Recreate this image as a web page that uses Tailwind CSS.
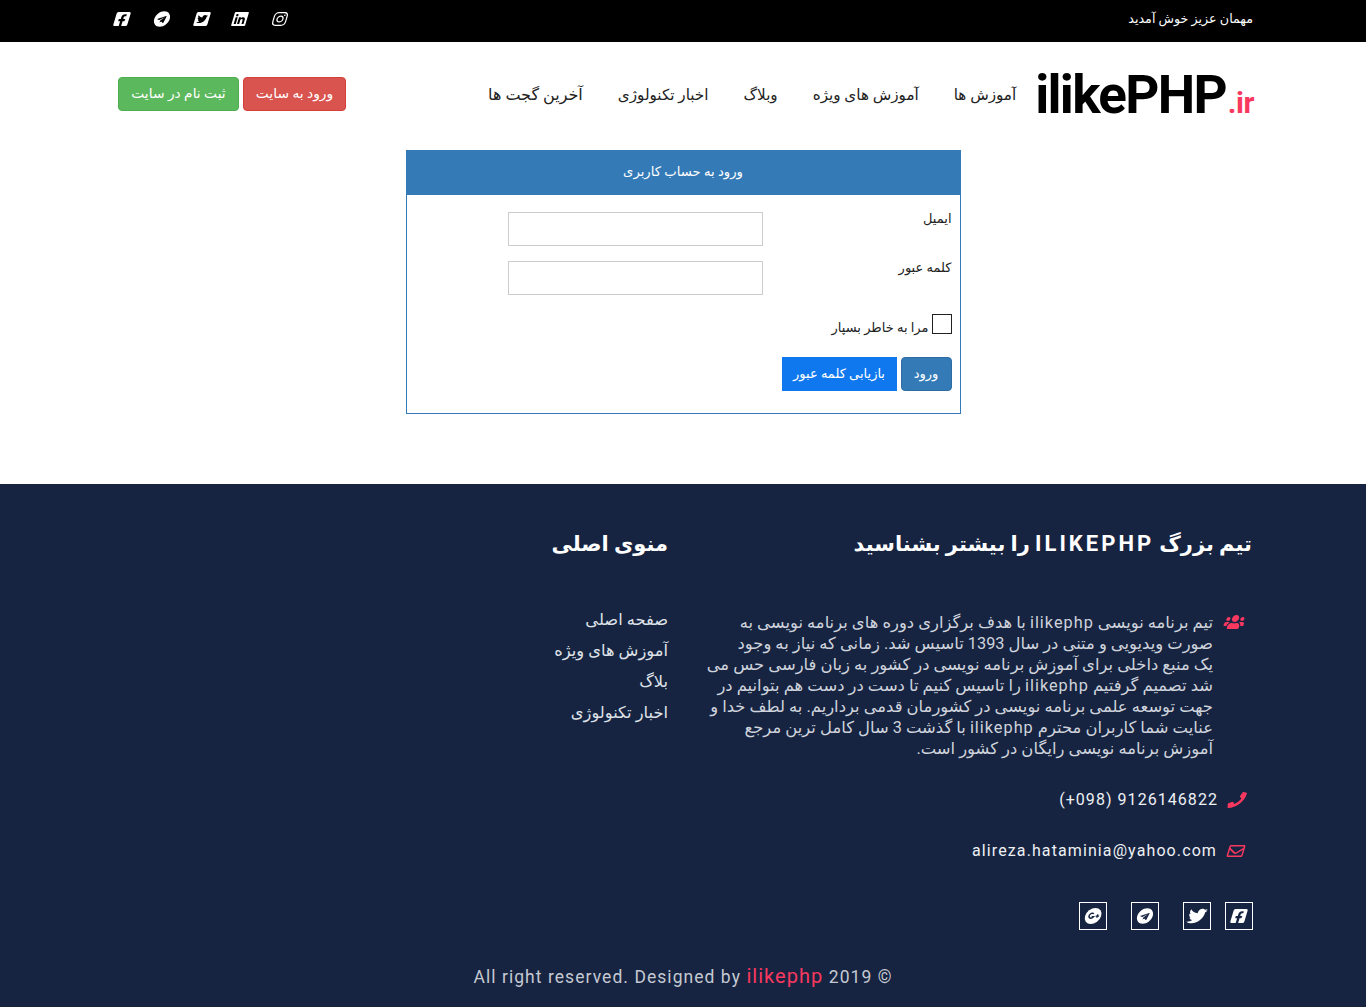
<!DOCTYPE html>
<html lang="fa" dir="rtl">
<head>
<meta charset="UTF-8">
<title>ورود به حساب کاربری | ilikePHP</title>
<script src="https://cdn.jsdelivr.net/npm/@tailwindcss/browser@4"></script>
</head>
<body class="bg-white font-['Roboto','DejaVu_Sans',sans-serif] text-[#222]">

<!-- top bar -->
<div class="bg-black h-[42px] flex items-center justify-between pr-[113px] pl-[114px] text-white">
  <span class="text-[12.7px] leading-none -mt-1">مهمان عزیز خوش آمدید</span>
  <div class="flex gap-[24px] -mt-1">
    <svg class="w-4 h-4 fill-white overflow-visible" viewBox="0 0 448 512"><g transform="matrix(1 0 -0.3 1 77 0)"><path d="M224.100 141c-63.600 0-114.900 51.300-114.900 114.900s51.300 114.900 114.900 114.900S339 319.500 339 255.900 287.700 141 224.100 141zm0 189.600c-41.100 0-74.700-33.500-74.700-74.700s33.500-74.700 74.700-74.700 74.700 33.500 74.700 74.700-33.600 74.700-74.700 74.700zm146.400-194.300c0 14.900-12 26.800-26.800 26.800-14.900 0-26.800-12-26.800-26.800s12-26.800 26.800-26.800 26.800 12 26.800 26.800zm76.100 27.200c-1.700-35.900-9.900-67.700-36.200-93.900-26.200-26.200-58-34.400-93.900-36.200-37-2.100-147.900-2.100-184.900 0-35.800 1.700-67.600 9.900-93.900 36.100s-34.400 58-36.200 93.900c-2.100 37-2.100 147.900 0 184.900 1.700 35.900 9.900 67.700 36.200 93.900s58 34.400 93.900 36.200c37 2.100 147.900 2.100 184.900 0 35.900-1.700 67.700-9.900 93.900-36.200 26.200-26.200 34.400-58 36.200-93.900 2.100-37 2.100-147.800 0-184.800zM398.800 388c-7.800 19.600-22.900 34.700-42.600 42.600-29.500 11.700-99.500 9-132.100 9s-102.700 2.600-132.100-9c-19.600-7.800-34.700-22.900-42.600-42.600-11.700-29.500-9-99.500-9-132.100s-2.600-102.700 9-132.100c7.800-19.600 22.900-34.700 42.600-42.600 29.500-11.700 99.500-9 132.100-9s102.700-2.600 132.100 9c19.600 7.800 34.700 22.900 42.600 42.600 11.700 29.500 9 99.500 9 132.100s2.700 102.700-9 132.100z"/></g></svg>
    <svg class="w-4 h-4 fill-white overflow-visible" viewBox="0 0 448 512"><g transform="matrix(1 0 -0.3 1 77 0)"><path d="M416 32H31.900C14.300 32 0 46.500 0 64.300v383.400C0 465.500 14.300 480 31.900 480H416c17.600 0 32-14.500 32-32.300V64.300c0-17.800-14.400-32.300-32-32.300zM135.400 416H69V202.200h66.500V416zm-33.200-243c-21.300 0-38.500-17.300-38.500-38.500S80.900 96 102.200 96c21.200 0 38.500 17.300 38.500 38.500 0 21.300-17.200 38.500-38.500 38.500zm282.100 243h-66.400V312c0-24.800-.5-56.700-34.500-56.700-34.600 0-39.900 27-39.900 54.900V416h-66.400V202.200h63.700v29.200h.9c8.900-16.800 30.600-34.500 62.900-34.500 67.200 0 79.700 44.300 79.700 101.900V416z"/></g></svg>
    <svg class="w-4 h-4 -mr-[2px] fill-white overflow-visible" viewBox="0 0 448 512"><g transform="matrix(1 0 -0.3 1 77 0)"><path d="M400 32H48C21.500 32 0 53.500 0 80v352c0 26.500 21.500 48 48 48h352c26.500 0 48-21.500 48-48V80c0-26.500-21.500-48-48-48zm-48.900 158.800c.2 2.800.2 5.700.2 8.500 0 86.700-66 186.600-186.600 186.600-37.200 0-71.700-10.800-100.700-29.400 5.300.6 10.400.8 15.800.8 30.700 0 58.900-10.400 81.400-28-28.800-.6-53-19.500-61.300-45.500 10.100 1.500 19.200 1.500 29.600-1.200-30-6.100-52.500-32.500-52.500-64.400v-.8c8.700 4.900 18.900 7.900 29.600 8.300a65.447 65.447 0 0 1-29.200-54.600c0-12.200 3.200-23.400 8.900-33.100 32.300 39.800 80.800 65.800 135.200 68.600-9.300-44.500 24-80.600 64-80.600 18.900 0 35.900 7.900 47.900 20.700 14.800-2.800 29-8.300 41.600-15.800-4.900 15.200-15.100 28-28.600 36.100 13.100-1.400 25.800-5.100 37.600-10.200-8.900 13.100-20.100 24.700-32.900 34z"/></g></svg>
    <svg class="w-4 h-4 fill-white overflow-visible" viewBox="0 0 496 512"><g transform="matrix(1 0 -0.3 1 77 0)"><path d="M248 8C111 8 0 119 0 256s111 248 248 248 248-111 248-248S385 8 248 8zm121.800 169.900l-40.700 191.800c-3 13.600-11.100 16.900-22.400 10.500l-62-45.700-29.900 28.800c-3.300 3.300-6.100 6.100-12.500 6.100l4.400-63.100 114.900-103.800c5-4.400-1.100-6.900-7.700-2.500l-142 89.400-61.200-19.100c-13.300-4.200-13.600-13.300 2.800-19.700l239.100-92.200c11.100-4 20.800 2.700 17.200 19.500z"/></g></svg>
    <svg class="w-4 h-4 fill-white overflow-visible" viewBox="0 0 448 512"><g transform="matrix(1 0 -0.3 1 77 0)"><path d="M400 32H48A48 48 0 0 0 0 80v352a48 48 0 0 0 48 48h137.250V327.690h-63V256h63v-54.640c0-62.150 37-96.480 93.670-96.480 27.140 0 55.520 4.840 55.520 4.840v61h-31.270c-30.810 0-40.420 19.120-40.420 38.730V256h68.780l-11 71.690h-57.780V480H400a48 48 0 0 0 48-48V80a48 48 0 0 0-48-48z"/></g></svg>
  </div>
</div>

<!-- header -->
<header class="h-[108px] flex items-center justify-between pr-[112px] pl-[118px] pb-1">
  <div class="flex items-center gap-[19px]">
    <a dir="ltr" class="flex items-baseline font-['Roboto',sans-serif] font-bold text-black text-[53px] leading-none tracking-[-1.7px] mt-[2px]">ilikePHP<span class="text-[#f9385f] text-[30px] tracking-[-0.5px] ml-[2px]">.ir</span></a>
    <nav class="flex items-center gap-[35px] text-[15.2px] text-[#222] pt-[2px]">
      <a>آموزش ها</a>
      <a>آموزش های ویژه</a>
      <a>وبلاگ</a>
      <a>اخبار تکنولوژی</a>
      <a class="text-[16px]">آخرین گجت ها</a>
    </nav>
  </div>
  <div class="flex gap-1 text-[13.8px] text-white">
    <a class="bg-[#d9534f] border border-[#d43f3a] rounded w-[103px] h-[34px] pb-[2px] flex items-center justify-center">ورود به سایت</a>
    <a class="bg-[#5cb85c] border border-[#4cae4c] rounded w-[121px] h-[34px] pb-[2px] flex items-center justify-center">ثبت نام در سایت</a>
  </div>
</header>

<!-- login card -->
<main class="h-[334px]">
  <div class="w-[555px] h-[264px] mx-auto border border-[#337ab7]">
    <div class="bg-[#337ab7] text-white text-[13.2px] h-[44px] pb-[2px] flex items-center justify-center">ورود به حساب کاربری</div>
    <form class="pt-[17px] pr-[8px] text-[13px]">
      <div class="flex items-start">
        <label class="w-[189px] leading-[14px]">ایمیل</label>
        <input type="text" class="w-[255px] h-[34px] border border-[#ccc] bg-white">
      </div>
      <div class="flex items-start mt-[15px]">
        <label class="w-[189px] leading-[14px]">کلمه عبور</label>
        <input type="password" class="w-[255px] h-[34px] border border-[#ccc] bg-white">
      </div>
      <div class="flex items-end gap-[3px] mt-[19px]">
        <span class="w-5 h-5 border border-[#222] bg-white"></span>
        <label class="leading-[14px] -mb-[1px]">مرا به خاطر بسپار</label>
      </div>
      <div class="flex gap-1 mt-[23px] text-white">
        <button type="button" class="bg-[#337ab7] border border-[#2e6da4] rounded w-[51px] h-[34px]">ورود</button>
        <a class="bg-[#0f78ee] w-[115px] h-[34px] flex items-center justify-center">بازیابی کلمه عبور</a>
      </div>
    </form>
  </div>
</main>

<!-- footer -->
<footer class="bg-[#162441] h-[523px] pt-[43px] pr-[114px] text-white">
  <div class="flex">
    <section class="w-[584px]">
      <h2 class="text-[21px] font-bold leading-[34px] h-[34px]">تیم بزرگ <span class="text-[22px] tracking-[3px]">ILIKEPHP</span> را بیشتر بشناسید</h2>
      <div class="flex mt-[51px]">
        <svg class="w-[21px] h-[16px] ml-[11px] mr-[7px] mt-[2px] shrink-0 fill-[#f9385f] overflow-visible" viewBox="0 0 640 512"><g transform="matrix(1 0 -0.3 1 77 0)"><path d="M96 224c35.300 0 64-28.700 64-64s-28.700-64-64-64-64 28.700-64 64 28.700 64 64 64zm448 0c35.300 0 64-28.700 64-64s-28.700-64-64-64-64 28.700-64 64 28.700 64 64 64zm32 32h-64c-17.600 0-33.500 7.100-45.100 18.600 40.300 22.100 68.900 62 75.100 109.400h66c17.700 0 32-14.300 32-32v-32c0-35.300-28.700-64-64-64zm-256 0c61.900 0 112-50.100 112-112S381.900 32 320 32 208 82.100 208 144s50.100 112 112 112zm76.800 32h-8.300c-20.800 10-43.900 16-68.500 16s-47.600-6-68.500-16h-8.300C179.600 288 128 339.600 128 403.200V432c0 26.500 21.500 48 48 48h288c26.500 0 48-21.500 48-48v-28.800c0-63.600-51.600-115.200-115.200-115.200zm-223.700-13.400C161.500 263.100 145.600 256 128 256H64c-35.300 0-64 28.700-64 64v32c0 17.700 14.300 32 32 32h65.900c6.300-47.400 34.900-87.300 75.200-109.400z"/></g></svg>
        <p class="text-[16.4px] leading-[21px] text-[#cfd3dc] whitespace-nowrap">تیم برنامه نویسی <span class="text-[16.3px] tracking-[1px]">ilikephp</span> با هدف برگزاری دوره های برنامه نویسی به<br>صورت ویدیویی و متنی در سال <span class="text-[16.3px] tracking-[1px]">1393</span> تاسیس شد. زمانی که نیاز به وجود<br>یک منبع داخلی برای آموزش برنامه نویسی در کشور به زبان فارسی حس می<br>شد تصمیم گرفتیم <span class="text-[16.3px] tracking-[1px]">ilikephp</span> را تاسیس کنیم تا دست در دست هم بتوانیم در<br>جهت توسعه علمی برنامه نویسی در کشورمان قدمی برداریم. به لطف خدا و<br>عنایت شما کاربران محترم <span class="text-[16.3px] tracking-[1px]">ilikephp</span> با گذشت <span class="text-[16.3px] tracking-[1px]">3</span> سال کامل ترین مرجع<br>آموزش برنامه نویسی رایگان در کشور است.</p>
      </div>
      <div class="flex items-center mt-[29px] h-[24px]">
        <svg class="w-[20px] h-[16px] ml-[9px] mr-[5px] fill-[#f9385f] overflow-visible" viewBox="0 0 512 512"><g transform="matrix(1 0 -0.3 1 77 0)"><path d="M493.400 24.600l-104-24c-11.300-2.600-22.900 3.300-27.500 13.900l-48 112c-4.200 9.800-1.400 21.300 6.900 28l60.600 49.600c-36 76.700-98.900 140.500-177.200 177.200l-49.600-60.600c-6.800-8.300-18.200-11.100-28-6.900l-112 48C3.900 366.500-2 378.100.6 389.400l24 104C27.100 504.200 36.700 512 48 512c256.100 0 464-207.500 464-464 0-11.200-7.700-20.900-18.600-23.400z"/></g></svg>
        <span dir="ltr" class="text-[16px] tracking-[1.05px] text-[#eef0f4]">(+098) 9126146822</span>
      </div>
      <div class="flex items-center mt-[27px] h-[24px]">
        <svg class="w-[18px] h-[16px] ml-[10px] mr-[7px] fill-[#f9385f] overflow-visible" viewBox="0 0 512 512"><g transform="matrix(1 0 -0.3 1 77 0)"><path d="M464 64H48C21.490 64 0 85.490 0 112v288c0 26.510 21.490 48 48 48h416c26.510 0 48-21.490 48-48V112c0-26.510-21.490-48-48-48zm0 48v40.805c-22.422 18.259-58.168 46.651-134.587 106.490-16.841 13.247-50.201 45.072-73.413 44.701-23.208.375-56.579-31.459-73.413-44.701C106.180 199.465 70.425 171.067 48 152.805V112h416zM48 400V214.398c22.914 18.251 55.409 43.862 104.938 82.646 21.857 17.205 60.134 55.186 103.062 54.955 42.717.231 80.509-37.199 103.053-54.947 49.528-38.783 82.032-64.401 104.947-82.653V400H48z"/></g></svg>
        <span dir="ltr" class="text-[16px] tracking-[1.1px] text-[#eef0f4]">alireza.hataminia@yahoo.com</span>
      </div>
    </section>
    <section>
      <h2 class="text-[21px] font-bold leading-[34px] h-[34px]">منوی اصلی</h2>
      <ul class="mt-[43px] text-[16.3px] text-[#dfe2e8] leading-[31px]">
        <li>صفحه اصلی</li>
        <li>آموزش های ویژه</li>
        <li>بلاگ</li>
        <li>اخبار تکنولوژی</li>
      </ul>
    </section>
  </div>

  <!-- social -->
  <div class="flex mt-[39px] -mr-[1px]">
    <a class="w-7 h-7 border border-white flex items-center justify-center"><svg class="w-4 h-4 fill-white overflow-visible" viewBox="0 0 448 512"><g transform="matrix(1 0 -0.3 1 77 0)"><path d="M400 32H48A48 48 0 0 0 0 80v352a48 48 0 0 0 48 48h137.250V327.690h-63V256h63v-54.640c0-62.150 37-96.480 93.670-96.480 27.140 0 55.520 4.840 55.520 4.840v61h-31.270c-30.810 0-40.420 19.120-40.420 38.730V256h68.780l-11 71.690h-57.780V480H400a48 48 0 0 0 48-48V80a48 48 0 0 0-48-48z"/></g></svg></a>
    <a class="w-7 h-7 border border-white flex items-center justify-center mr-[14px]"><svg class="w-[18px] h-[18px] fill-white overflow-visible" viewBox="0 0 512 512"><g transform="matrix(1 0 -0.3 1 77 0)"><path d="M459.370 151.716c.325 4.548.325 9.097.325 13.645 0 138.720-105.583 298.558-298.558 298.558-59.452 0-114.680-17.219-161.137-47.106 8.447.974 16.568 1.299 25.340 1.299 49.055 0 94.213-16.568 130.274-44.832-46.132-.975-84.792-31.188-98.112-72.772 6.498.974 12.995 1.624 19.818 1.624 9.421 0 18.843-1.300 27.614-3.573-48.081-9.747-84.143-51.980-84.143-102.985v-1.299c13.969 7.797 30.214 12.670 47.431 13.319-28.264-18.843-46.781-51.005-46.781-87.391 0-19.492 5.197-37.360 14.294-52.954 51.655 63.675 129.300 105.258 216.365 109.807-1.624-7.797-2.599-15.918-2.599-24.040 0-57.828 46.782-104.934 104.934-104.934 30.213 0 57.502 12.670 76.670 33.137 23.715-4.548 46.456-13.320 66.599-25.340-7.798 24.366-24.366 44.833-46.132 57.827 21.117-2.273 41.584-8.122 60.426-16.243-14.292 20.791-32.161 39.308-52.628 54.253z"/></g></svg></a>
    <a class="w-7 h-7 border border-white flex items-center justify-center mr-[24px]"><svg class="w-4 h-4 fill-white overflow-visible" viewBox="0 0 496 512"><g transform="matrix(1 0 -0.3 1 77 0)"><path d="M248 8C111 8 0 119 0 256s111 248 248 248 248-111 248-248S385 8 248 8zm121.800 169.900l-40.700 191.800c-3 13.600-11.100 16.900-22.400 10.500l-62-45.700-29.900 28.800c-3.300 3.300-6.100 6.100-12.500 6.100l4.400-63.100 114.900-103.800c5-4.400-1.100-6.900-7.700-2.500l-142 89.400-61.200-19.100c-13.300-4.200-13.600-13.300 2.800-19.700l239.100-92.200c11.100-4 20.800 2.700 17.200 19.500z"/></g></svg></a>
    <a class="w-7 h-7 border border-white flex items-center justify-center mr-[24px]"><svg class="w-4 h-4 overflow-visible" viewBox="0 0 32 32"><g transform="matrix(1 0 -0.3 1 5 0)"><circle cx="16" cy="16" r="16" fill="#fff"/><path d="M16 11.500a5 5 0 1 0 1.500 6h-4" fill="none" stroke="#162441" stroke-width="3"/><path d="M21 16h7M24.500 12.500v7" stroke="#162441" stroke-width="2.500"/></g></svg></a>
  </div>

  <p dir="ltr" class="mt-[32px] mr-[-114px] text-center text-[17.5px] tracking-[1.05px] text-[#c5c9d2] leading-[28px]">All right reserved. Designed by <span class="text-[#f9385f] text-[20px]">ilikephp</span> 2019 ©</p>
</footer>
</body>
</html>
